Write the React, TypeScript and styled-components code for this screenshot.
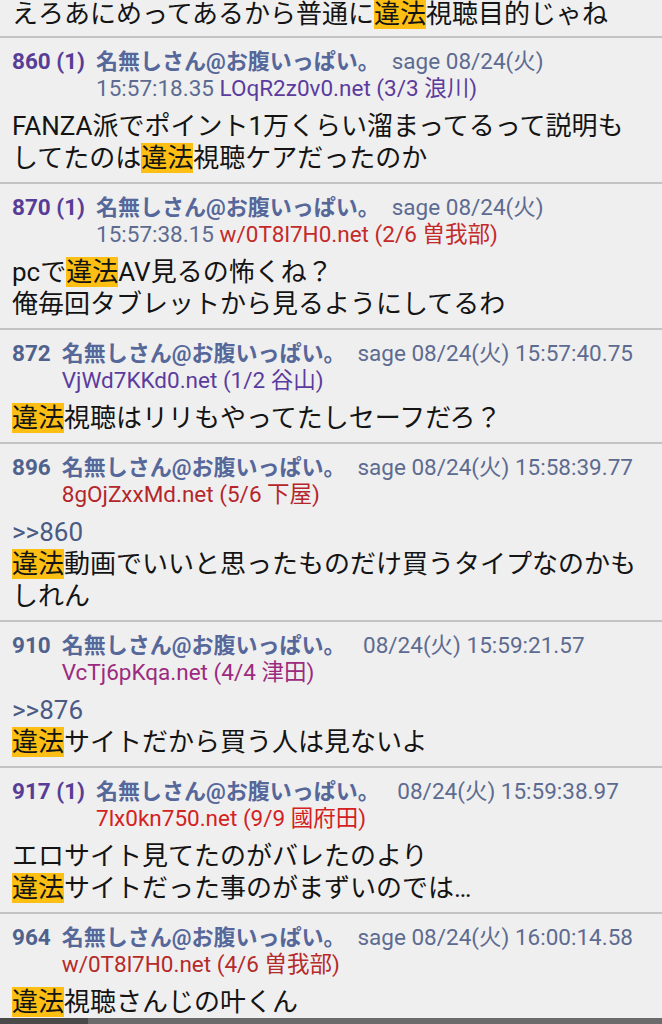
import React from "react";
import styled, { createGlobalStyle } from "styled-components";

const GlobalStyle = createGlobalStyle`
  html, body {
    margin: 0;
    padding: 0;
    background: #efefef;
    overflow: hidden;
  }
  body {
    font-family: Roboto, "Noto Sans CJK JP", "Noto Sans", sans-serif;
    color: #151515;
  }
`;

const Page = styled.div`
  width: 662px;
  height: 1024px;
  overflow: hidden;
  background: #efefef;
  position: relative;
`;

const List = styled.div`
  display: flex;
  flex-direction: column;
  margin-top: -2px;
`;

const Post = styled.article<{ $first?: boolean }>`
  display: flex;
  flex-direction: column;
  gap: 8px;
  padding: ${(p) => (p.$first ? "0 12px 6px" : "10px 12px 8px")};
  border-bottom: 2px solid #c3c3c3;
`;

const Header = styled.div`
  display: grid;
  grid-template-columns: auto 1fr;
  column-gap: 11px;
  font-size: 22.5px;
  line-height: 27px;
  white-space: pre;
`;

const Num = styled.span<{ $replied?: boolean }>`
  font-weight: 700;
  color: ${(p) => (p.$replied ? "#583d96" : "#4f628c")};
`;

const Meta = styled.div`
  display: flex;
  flex-direction: column;
`;

const MetaLine = styled.div`
  color: #5d6b91;
`;

const Name = styled.span`
  font-weight: 700;
  font-size: 22px;
  color: #56679a;
  margin-right: 12px;
`;

const Id = styled.span<{ $color: string }>`
  color: ${(p) => p.$color};
`;

const Body = styled.div`
  font-size: 26px;
  line-height: 32px;
  color: #141414;
`;

const Anchor = styled.div`
  color: #4b5a84;
`;

const Hl = styled.span`
  background: #fdbf13;
`;

const ScrollBar = styled.div`
  position: absolute;
  left: 0;
  right: 0;
  bottom: 0;
  height: 6px;
  background: #6b6b6b;
  display: flex;
`;

const ScrollThumb = styled.div`
  width: 88px;
  background: #4a4a4a;
`;

const H = () => <Hl>違法</Hl>;

type PostData = {
  num: string;
  replied: boolean;
  line1: string;
  line2pre?: string;
  id: string;
  idColor: string;
  anchor?: string;
  body: React.ReactNode[];
};

const posts: PostData[] = [
  {
    num: "860 (1)",
    replied: true,
    line1: "sage 08/24(火)",
    line2pre: "15:57:18.35 ",
    id: "LOqR2z0v0.net (3/3 浪川)",
    idColor: "#5b3c9e",
    body: [
      <>FANZA派でポイント1万くらい溜まってるって説明も</>,
      <>
        してたのは<H />視聴ケアだったのか
      </>,
    ],
  },
  {
    num: "870 (1)",
    replied: true,
    line1: "sage 08/24(火)",
    line2pre: "15:57:38.15 ",
    id: "w/0T8l7H0.net (2/6 曽我部)",
    idColor: "#c42a2a",
    body: [
      <>
        pcで<H />AV見るの怖くね？
      </>,
      <>俺毎回タブレットから見るようにしてるわ</>,
    ],
  },
  {
    num: "872",
    replied: false,
    line1: "sage 08/24(火) 15:57:40.75",
    id: "VjWd7KKd0.net (1/2 谷山)",
    idColor: "#5b3c9e",
    body: [
      <>
        <H />視聴はリリもやってたしセーフだろ？
      </>,
    ],
  },
  {
    num: "896",
    replied: false,
    line1: "sage 08/24(火) 15:58:39.77",
    id: "8gOjZxxMd.net (5/6 下屋)",
    idColor: "#b5262b",
    anchor: ">>860",
    body: [
      <>
        <H />動画でいいと思ったものだけ買うタイプなのかも
      </>,
      <>しれん</>,
    ],
  },
  {
    num: "910",
    replied: false,
    line1: " 08/24(火) 15:59:21.57",
    id: "VcTj6pKqa.net (4/4 津田)",
    idColor: "#9c2a7e",
    anchor: ">>876",
    body: [
      <>
        <H />サイトだから買う人は見ないよ
      </>,
    ],
  },
  {
    num: "917 (1)",
    replied: true,
    line1: " 08/24(火) 15:59:38.97",
    id: "7lx0kn750.net (9/9 國府田)",
    idColor: "#d42121",
    body: [
      <>エロサイト見てたのがバレたのより</>,
      <>
        <H />サイトだった事のがまずいのでは…
      </>,
    ],
  },
  {
    num: "964",
    replied: false,
    line1: "sage 08/24(火) 16:00:14.58",
    id: "w/0T8l7H0.net (4/6 曽我部)",
    idColor: "#b52a2a",
    body: [
      <>
        <H />視聴さんじの叶くん
      </>,
    ],
  },
];

export default function App() {
  return (
    <Page>
      <GlobalStyle />
      <List>
        <Post $first>
          <Body>
            えろあにめってあるから普通に<H />視聴目的じゃね
          </Body>
        </Post>
        {posts.map((p) => (
          <Post key={p.num}>
            <Header>
              <Num $replied={p.replied}>{p.num}</Num>
              <Meta>
                <MetaLine>
                  <Name>名無しさん@お腹いっぱい。</Name>
                  {p.line1}
                </MetaLine>
                <MetaLine>
                  {p.line2pre}
                  <Id $color={p.idColor}>{p.id}</Id>
                </MetaLine>
              </Meta>
            </Header>
            <Body>
              {p.anchor && <Anchor>{p.anchor}</Anchor>}
              {p.body.map((b, i) => (
                <div key={i}>{b}</div>
              ))}
            </Body>
          </Post>
        ))}
      </List>
      <ScrollBar>
        <ScrollThumb />
      </ScrollBar>
    </Page>
  );
}
